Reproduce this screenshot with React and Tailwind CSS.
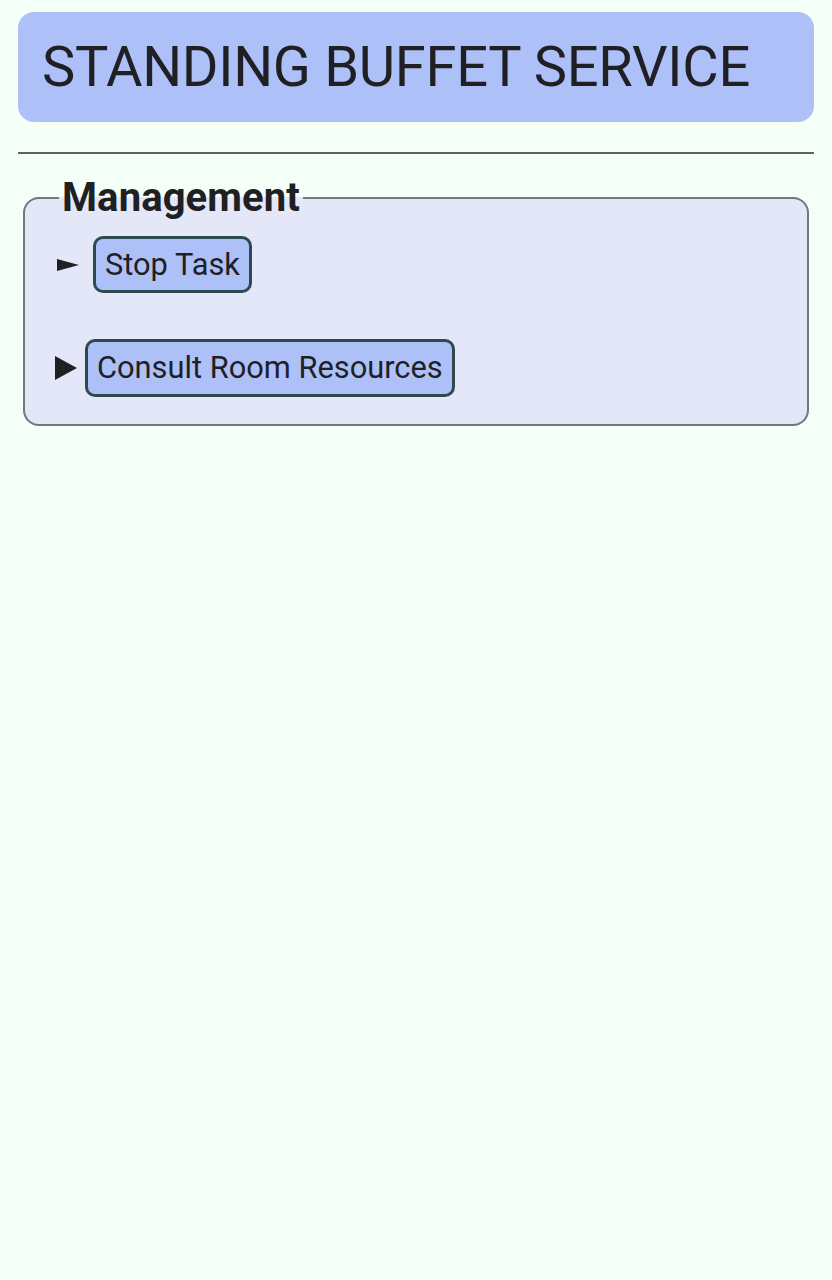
export default function App() {
	return (
		<div className="min-h-[1280px] w-full bg-[#f3fff7] px-[18px] pt-[12px] font-['Roboto',sans-serif] text-[#1f1f24]">
			<div className="flex h-[110px] items-center rounded-[16px] bg-[#adc0f7] pl-[24px]">
				<h1 className="text-[56px] leading-none font-normal tracking-[-0.3px]">STANDING BUFFET SERVICE</h1>
			</div>

			<hr className="mt-[30px] border-t-2 border-[#5c6266]" />

			<fieldset className="mx-[5px] mt-[22px] rounded-[16px] border-2 border-[#74787b] bg-[#e3e7f8] pl-[30px] pr-[34px] pb-[27px]">
				<legend className="ml-[4px] px-[3px] text-[40px] leading-[44px] font-bold tracking-[0.1px]">Management</legend>

				<div className="mt-[16px] flex items-center gap-[14px] pl-[2px]">
					<svg width="22" height="12" viewBox="0 0 22 12" className="shrink-0">
						<path d="M0 0 L22 6 L0 12 Z" fill="#1f1f24" />
					</svg>
					<button className="rounded-[10px] border-[3px] border-[#2d4a4f] bg-[#adc0f7] px-[9px] py-[9px] text-[30.8px] leading-[33px]">Stop Task</button>
				</div>

				<div className="mt-[46px] flex items-center gap-[8px]">
					<svg width="22" height="24" viewBox="0 0 22 24" className="shrink-0">
						<path d="M0 0 L22 12 L0 24 Z" fill="#1f1f24" />
					</svg>
					<button className="rounded-[10px] border-[3px] border-[#2d4a4f] bg-[#adc0f7] px-[9px] py-[9px] text-[30.8px] leading-[34px]">Consult Room Resources</button>
				</div>
			</fieldset>
		</div>
	);
}
